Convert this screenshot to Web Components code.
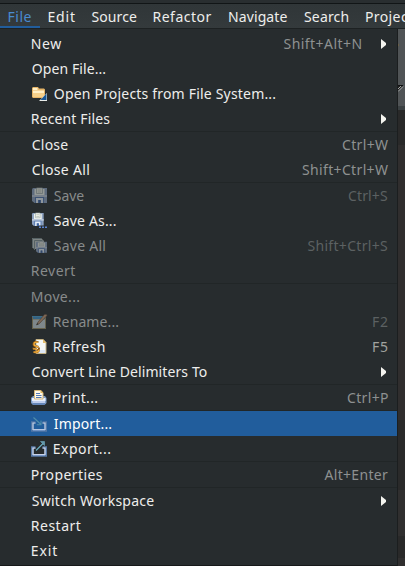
<!DOCTYPE html>
<html lang="en">
<head>
<meta charset="utf-8">
<title>File menu</title>
<style>
html,body{margin:0;height:100%;background:#2d2d2d;overflow:hidden}
body{font:14px "Noto Sans","Open Sans",sans-serif;color:#eeeeec}
</style>
</head>
<body>
<app-window>
  <menu-bar slot="bar">
    <menu-title active ink="23" style="--x:8.5px;--w:40px">File</menu-title>
    <menu-title ink="26.5" style="--x:8.5px;--w:43px">Edit</menu-title>
    <menu-title ink="45.5" style="--x:8.5px;--w:62px">Source</menu-title>
    <menu-title ink="58" style="--x:8.5px;--w:75.5px">Refactor</menu-title>
    <menu-title ink="58.5" style="--x:8.5px;--w:75px">Navigate</menu-title>
    <menu-title ink="44.5" style="--x:8.5px;--w:62px">Search</menu-title>
    <menu-title ink="47" style="--x:8.5px;--w:65px">Project</menu-title>
  </menu-bar>
  <drop-menu>
    <menu-item ink="29.5" keys="Shift+Alt+N" kink="78" sub>New</menu-item>
    <menu-item ink="73.5">Open File...</menu-item>
    <menu-item icon="folder" ink="221.5">Open Projects from File System...</menu-item>
    <menu-item ink="78.5" sub>Recent Files</menu-item>
    <menu-rule></menu-rule>
    <menu-item ink="36.5" keys="Ctrl+W" kink="46">Close</menu-item>
    <menu-item ink="57.5" keys="Shift+Ctrl+W" kink="86">Close All</menu-item>
    <menu-rule></menu-rule>
    <menu-item icon="save" ink="30.5" keys="Ctrl+S" kink="40" disabled>Save</menu-item>
    <menu-item icon="saveas" ink="62">Save As...</menu-item>
    <menu-item icon="saveall" ink="51.5" keys="Shift+Ctrl+S" kink="80.5" disabled>Save All</menu-item>
    <menu-item ink="43.5" disabled>Revert</menu-item>
    <menu-rule></menu-rule>
    <menu-item ink="47.5" disabled>Move...</menu-item>
    <menu-item icon="rename" ink="64.5" keys="F2" kink="15" disabled>Rename...</menu-item>
    <menu-item icon="refresh" ink="51" keys="F5" kink="15" keybright>Refresh</menu-item>
    <menu-item ink="175" sub>Convert Line Delimiters To</menu-item>
    <menu-rule></menu-rule>
    <menu-item icon="print" ink="43.5" keys="Ctrl+P" kink="41">Print...</menu-item>
    <menu-rule></menu-rule>
    <menu-item icon="import" ink="57.5" selected>Import...</menu-item>
    <menu-item icon="export" ink="56.5">Export...</menu-item>
    <menu-rule></menu-rule>
    <menu-item ink="71" keys="Alt+Enter" kink="63.5">Properties</menu-item>
    <menu-rule></menu-rule>
    <menu-item ink="122.5" sub>Switch Workspace</menu-item>
    <menu-item ink="49">Restart</menu-item>
    <menu-item ink="25.5">Exit</menu-item>
  </drop-menu>
  <editor-edge slot="edge"></editor-edge>
</app-window>
<script>
const ctx = document.createElement('canvas').getContext('2d');
function fit(el, text, ink) {
  ctx.font = '14px "Noto Sans","Open Sans",sans-serif';
  const m = ctx.measureText(text);
  const left = m.actualBoundingBoxLeft, right = m.actualBoundingBoxRight;
  const sp = (ink - (right + left)) / (text.length - 1);
  el.style.letterSpacing = sp + 'px';
  el.style.marginLeft = left + 'px';
  el.style.marginRight = -(m.width - right + sp) + 'px';
}

const floppy = `<path d="M1 1.5Q1 0 2.5 0H16v15H3.5L1 13z" fill="#8ba0bf"/><path d="M3.500 1h10v6h-10z" fill="#edf2ec"/><path d="M5.500 0h6v5.500h-6z" fill="#fafbf4" stroke="#9ca9a8" stroke-width=".8"/><path d="M6.500 2h4M6.500 4h4" stroke="#b2bcaf"/><path d="M1 7h15v2H1z" fill="#b9c6d8"/><path d="M4 9h9v6H4z" fill="#4f73ae"/><path d="M5 10h7v5h-2v-3H7v3H5z" fill="#e4edf7"/><path d="M8 12h1v3H8z" fill="#345a9c"/>`;
const tray = `<path d="M4.500 6.500H1.300v8h13.400v-8H11.500" fill="none" stroke="#587aa7" stroke-width="2.600"/><path d="M4.500 7H2v6.500h12V7h-2.500" fill="none" stroke="#d3dcee" stroke-width="1.200"/><path d="M2 14.300h12" stroke="#8ca9dc" stroke-width=".8"/>`;
const icons = {
  folder: `<path d="M1 2l1-1h5l1 1.500h5l1 1V11l-1 1H2l-1-1z" fill="#e6b568"/><path d="M2 2h4.500v2H2zM2 4.500h11V7H2z" fill="#fff0c7"/><path d="M2 7h11v4H2z" fill="#f5d08b"/><path d="M16 7v8H8z" fill="#e9edea"/><path d="M15.500 7.500V14H9.500z" fill="#175696"/>`,
  save: floppy,
  saveas: `<g transform="translate(.2 0) scale(.78 .86)">${floppy}</g><path d="M7.500 12.500H16V16H7.500z" fill="#272c2e"/><path d="M8 13.500h2v1.500H8zM11 13.500h2v1.500h-2zM14 13.500h2v1.500h-2z" fill="#5b83d0"/>`,
  saveall: `<path d="M1 0h9l3 3v8H3l-2-2z" fill="#c5ccc9"/><path d="M1.500 10V.5H10M3.500 12V2.500h8" fill="none" stroke="#7d8f93"/><g transform="translate(4.300 3.800) scale(.73)">${floppy}</g>`,
  rename: `<path d="M1 2h14v13H1z" fill="#9a8f68"/><path d="M2 3h12v2H2z" fill="#3f91c8"/><path d="M2 5.500h12V14H2z" fill="#c6d3d8"/><path d="M1 2.500h13" stroke="#4da1d5"/><path d="M5.500 11l1.500-3L13.500.500q2-.8 2.500 1L8.500 9.500z" fill="#c79a76" stroke="#5a4638" stroke-width=".6"/><path d="M5.500 11l.8-2 1.200 1.200z" fill="#322e28"/>`,
  refresh: `<path d="M5 .5h7l3 3v11H5z" fill="#f6f8f4" stroke="#c3b184"/><path d="M12 0v4h3.500z" fill="#e4bd6b"/><path d="M7 11h7v3H7z" fill="#dce7f5"/><path d="M7.500 3.200Q2.500 2 2.500 5.200q0 2 3 2.100L7.500 8M1.500 9.500q3-.5 4 1t2.500-.5V8.500M2.500 13q5 1 5.500-2" fill="none" stroke="#955a12" stroke-width="1.900"/><path d="M7 3.500Q3 2.500 3 5q0 2 2.500 2.200L7.500 8M2 10q3-.5 4 1M2.500 13q4.500.8 5.500-2" fill="none" stroke="#f4b13f" stroke-width="1.200"/>`,
  print: `<path d="M0 8l2-2h12l1.500 2v5l-2 2H2l-2-2z" fill="#7d9dc9"/><path d="M1 8h13.500v3H1z" fill="#e8eefa"/><path d="M1.500 11H14v2H1.500z" fill="#bdccec"/><path d="M1.500 14H14" stroke="#4c6fa6"/><path d="M3.500.5H10L12 3v6H3.500z" fill="#fff9e8" stroke="#d4b77b"/><path d="M9.500 0v3h3z" fill="#e1b75c"/><path d="M5 3.500h4M5 5.500h5.500M5 7.500h5.500" stroke="#5379b6"/>`,
  import: tray + `<path d="M2.500 1.500L10 8.500M10 4.500V8.700H5.800" fill="none" stroke="#5594ad" stroke-width="1.100"/>`,
  export: tray + `<path d="M5 9.500L12 2.500" stroke="#6db0c6" stroke-width="1.100"/><path d="M9.500.5H13.500v4z" fill="#6598ac" stroke="#6ba9bd" stroke-width=".6"/>`
};

class AppWindow extends HTMLElement {
  constructor() {
    super();
    this.attachShadow({mode: 'open'}).innerHTML = `<style>
      :host{display:grid;grid-template:29px 1fr/398px 1fr;width:405px;height:566px;overflow:hidden}
      .bar{grid-column:1/-1;min-width:0}
    </style><div class="bar"><slot name="bar"></slot></div><slot></slot><slot name="edge"></slot>`;
  }
}
class MenuBar extends HTMLElement {
  constructor() {
    super();
    this.attachShadow({mode: 'open'}).innerHTML = `<style>
      :host{display:flex;box-sizing:border-box;height:29px;padding-top:4px;overflow:hidden;
        background:linear-gradient(#292e30 0 3px,#111516 3px 4px,#303638 4px,#343a3c 28px,#1d2122 28px)}
    </style><slot></slot>`;
  }
}
class MenuTitle extends HTMLElement {
  constructor() {
    super();
    this.attachShadow({mode: 'open'}).innerHTML = `<style>
      :host{display:block;flex:none;box-sizing:border-box;width:var(--w);height:24px;padding-left:var(--x);line-height:26px;white-space:nowrap}
      :host([active]){color:#4a8bd0;box-shadow:inset 0 -2px #215d9c}
      span{display:inline-block}
    </style><span><slot></slot></span>`;
  }
  connectedCallback() {
    fit(this.shadowRoot.querySelector('span'), this.textContent.trim(), +this.getAttribute('ink'));
  }
}
class DropMenu extends HTMLElement {
  constructor() {
    super();
    this.attachShadow({mode: 'open'}).innerHTML = `<style>
      :host{display:flex;flex-direction:column;box-sizing:border-box;height:537px;padding-top:2px;background:#272c2e;border-right:1px solid #1b1e1f;border-bottom:1px solid #17191a}
    </style><slot></slot>`;
  }
}
class MenuRule extends HTMLElement {
  constructor() {
    super();
    this.attachShadow({mode: 'open'}).innerHTML = `<style>:host{display:block;height:1px;background:#212627}</style>`;
  }
}
class MenuItem extends HTMLElement {
  constructor() {
    super();
    this.attachShadow({mode: 'open'}).innerHTML = `<style>
      :host{display:flex;align-items:center;box-sizing:border-box;height:25px;line-height:25px;padding:0 9px 0 31px;white-space:nowrap}
      :host([selected]){background:#215d9c;color:#fff}
      :host([disabled]){color:#878b8b}
      svg{flex:none;display:block}
      .icon{width:16px;height:16px;margin:1px 6px 0 0;overflow:visible}
      :host([disabled]) .icon{opacity:.55}
      :host([selected]) .icon{opacity:.9}
      .label{padding-left:.8px}
      .keys{color:#8e9191}
      :host([keybright]) .keys{color:#a1a39f}
      :host([disabled]) .keys{color:#5c6162}
      .gap{flex:1}
      .arrow{width:5px;height:10px;margin:0 2.5px 0 19px}
    </style>`;
  }
  connectedCallback() {
    const root = this.shadowRoot, icon = this.getAttribute('icon'), keys = this.getAttribute('keys');
    root.innerHTML += (icon ? `<svg class="icon" viewBox="0 0 16 16">${icons[icon]}</svg>` : '')
      + `<span class="label"><slot></slot></span><span class="gap"></span>`
      + (keys ? `<span class="keys">${keys}</span>` : '')
      + (this.hasAttribute('sub') ? `<svg class="arrow" viewBox="0 0 5 10"><path d="M0 0L5 4v2L0 10z" fill="#f4f4ef"/></svg>` : '');
    fit(root.querySelector('.label'), this.textContent.trim(), +this.getAttribute('ink'));
    if (keys) fit(root.querySelector('.keys'), keys, +this.getAttribute('kink'));
  }
}
class EditorEdge extends HTMLElement {
  constructor() {
    super();
    this.attachShadow({mode: 'open'}).innerHTML = `<style>
      :host{display:block;height:537px;background:linear-gradient(#505456 0 77px,#3b4143 77px 81px,#292929 81px 116px,#302e2e 116px 391px,#2a2a2a 391px 461px,#302f2f 461px 507px,#292929 507px 529px,#302f2f 529px)}
      svg{display:block}
    </style><svg width="7" height="66" viewBox="0 0 7 66"><path d="M0 14.500q1 1.500 0 3z" fill="#9a7129"/><path d="M0 57h5L0 62z" fill="#222"/><path d="M0 60l3-3M0 62.500l5-5" stroke="#c5c9c8" stroke-width=".8"/><path d="M0 56.500h5" stroke="#101112"/></svg>`;
  }
}
customElements.define('app-window', AppWindow);
customElements.define('menu-bar', MenuBar);
customElements.define('menu-title', MenuTitle);
customElements.define('drop-menu', DropMenu);
customElements.define('menu-rule', MenuRule);
customElements.define('menu-item', MenuItem);
customElements.define('editor-edge', EditorEdge);
</script>
</body>
</html>
